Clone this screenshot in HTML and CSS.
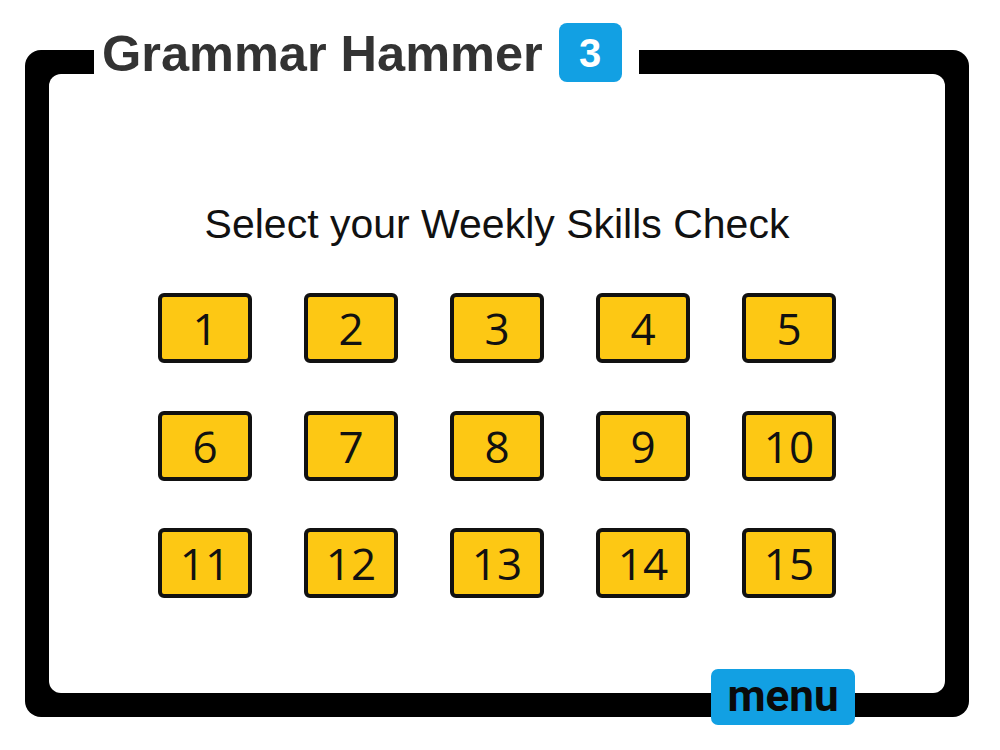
FILE: index.html
```html
<!DOCTYPE html>
<html lang="en">
<head>
<meta charset="utf-8">
<title>Grammar Hammer 3</title>
<link rel="stylesheet" href="styles.css">
</head>
<body>
<div class="frame">
  <div class="title">
    <span class="title-text">Grammar Hammer</span>
    <span class="badge">3</span>
  </div>
  <div class="inner">
    <h1 class="heading">Select your Weekly Skills Check</h1>
    <div class="grid">
      <button class="tile">1</button>
      <button class="tile">2</button>
      <button class="tile">3</button>
      <button class="tile">4</button>
      <button class="tile">5</button>
      <button class="tile">6</button>
      <button class="tile">7</button>
      <button class="tile">8</button>
      <button class="tile">9</button>
      <button class="tile">10</button>
      <button class="tile">11</button>
      <button class="tile">12</button>
      <button class="tile">13</button>
      <button class="tile">14</button>
      <button class="tile">15</button>
    </div>
  </div>
  <button class="menu">menu</button>
</div>
</body>
</html>
```
FILE: styles.css
```css
html, body {
  margin: 0;
  padding: 0;
  background: #ffffff;
}

body {
  width: 1000px;
  height: 750px;
  overflow: hidden;
  font-family: "Liberation Sans", Arial, sans-serif;
}

.frame {
  position: relative;
  box-sizing: border-box;
  margin: 50px 0 0 25px;
  width: 944px;
  height: 667px;
  padding: 24px;
  background: #000000;
  border-radius: 16px;
}

.inner {
  box-sizing: border-box;
  height: 100%;
  background: #ffffff;
  border-radius: 12px;
  padding-top: 127px;
}

.title {
  position: absolute;
  left: 69px;
  top: -27px;
  height: 59px;
  display: flex;
  align-items: center;
  gap: 16px;
  padding: 0 17px 0 8px;
  background: #ffffff;
}

.title-text {
  font-family: "Liberation Sans", Arial, sans-serif;
  font-weight: 700;
  font-size: 50.5px;
  color: #333333;
  line-height: 1;
  position: relative;
  top: 2px;
}

.badge {
  width: 63px;
  height: 59px;
  display: flex;
  align-items: center;
  justify-content: center;
  background: #12a0e3;
  border-radius: 8px;
  color: #ffffff;
  font-family: "Liberation Sans", Arial, sans-serif;
  font-weight: 700;
  font-size: 40px;
  line-height: 1;
}

.heading {
  margin: 0;
  text-align: center;
  font-family: "Liberation Sans", Arial, sans-serif;
  font-weight: 400;
  font-size: 41px;
  line-height: 46px;
  color: #111111;
}

.grid {
  margin: 46px auto 0;
  display: grid;
  grid-template-columns: repeat(5, 94px);
  grid-auto-rows: 70px;
  column-gap: 52px;
  row-gap: 47.5px;
  justify-content: center;
}

.tile {
  box-sizing: border-box;
  margin: 0;
  padding: 0;
  width: 94px;
  height: 70px;
  display: flex;
  align-items: center;
  justify-content: center;
  background: #fdc814;
  border: 4px solid #111111;
  border-radius: 6px;
  font-family: "Comic Sans MS", "Open Sans", sans-serif;
  font-weight: 400;
  font-size: 44px;
  line-height: 1;
  color: #111111;
  cursor: pointer;
}

.menu {
  position: absolute;
  right: 114px;
  bottom: -8px;
  box-sizing: border-box;
  margin: 0;
  padding: 0 0 2px;
  width: 144px;
  height: 56px;
  display: flex;
  align-items: center;
  justify-content: center;
  background: #12a0e3;
  border: none;
  border-radius: 7px;
  font-family: Roboto, "Liberation Sans", sans-serif;
  font-weight: 700;
  font-size: 44px;
  line-height: 1;
  color: #0a0a0a;
  cursor: pointer;
}
```
